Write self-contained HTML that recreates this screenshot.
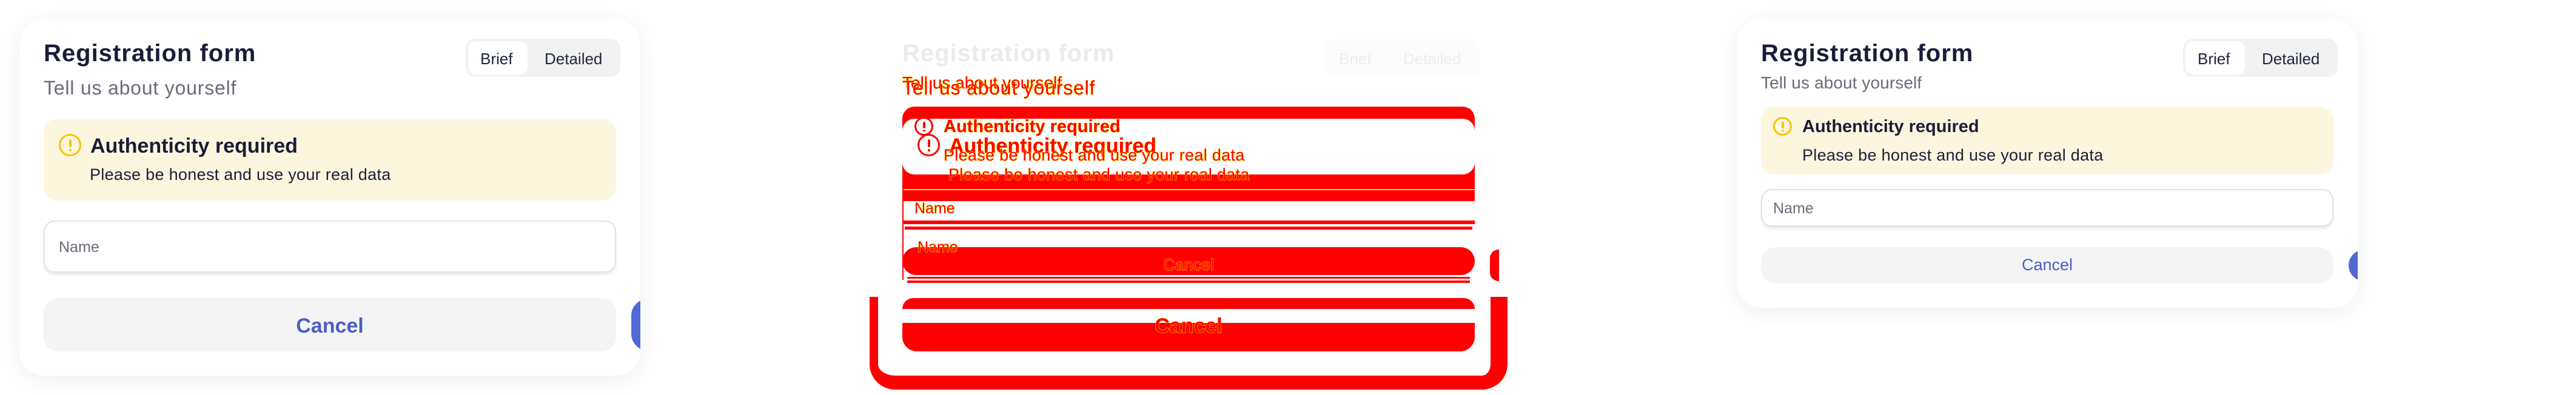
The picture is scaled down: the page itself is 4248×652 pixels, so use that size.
<!DOCTYPE html>
<html><head><meta charset="utf-8"><style>
*{margin:0;padding:0;box-sizing:border-box}
body{width:4248px;height:652px;background:#fff;position:relative;overflow:hidden;font-family:"Liberation Sans",sans-serif}
.panel{position:absolute;top:0;width:1416px;overflow:hidden;background:#fff}
.abs{position:absolute;white-space:nowrap;line-height:1}
.card{position:absolute;left:32px;top:32px;width:1024px;background:#fff;border-radius:40px;box-shadow:0 6px 40px rgba(0,0,0,0.07);overflow:hidden}
.title{font-weight:bold;font-size:40px;color:#1b1d38;letter-spacing:1px}
.toggle{position:absolute;left:736px;top:32px;width:255px;height:63px;background:#f2f2f2;border-radius:16px}
.pill{position:absolute;left:4px;top:4px;width:98px;height:55px;background:#fff;border-radius:13px}
.tg{font-size:26px;color:#1f2440}
.alert{position:absolute;left:40px;width:944px;background:#fdf6df;border-radius:22px}
.icon{position:absolute;border:3.5px solid #f8c400;border-radius:50%}
.icon i{position:absolute;left:50%;width:4px;margin-left:-2px;background:#f8c400;border-radius:2px}
.input{position:absolute;left:40px;width:944px;background:#fff;border:2px solid #e2e2e2;border-radius:18px;box-shadow:0 4px 5px rgba(0,0,0,0.08)}
.btn{position:absolute;left:40px;width:944px;background:#f4f4f4;border-radius:24px}
.blue{position:absolute;left:1009px;width:60px;background:#5069d4;border-radius:28px}
.red{position:absolute;background:#ff0000}
.rt{color:#ff0000;-webkit-text-stroke:1px #ffee00;paint-order:stroke fill}
</style></head><body>

<!-- LEFT PANEL -->
<div class="panel" style="left:0;height:652px;border-radius:0 0 16px 16px">
 <div class="card" style="height:588px">
  <div class="abs title" style="left:40px;top:36px">Registration form</div>
  <div class="abs" style="left:40px;top:97px;font-size:32px;color:#6a6b78;letter-spacing:0.8px">Tell us about yourself</div>
  <div class="toggle"><div class="pill"></div>
   <div class="abs tg" style="left:24px;top:20px">Brief</div>
   <div class="abs tg" style="left:130px;top:20px">Detailed</div></div>
  <div class="alert" style="top:164px;height:135px">
   <div class="icon" style="left:25px;top:25px;width:37px;height:37px"><i style="top:6px;height:13px"></i><i style="top:22px;height:4px"></i></div>
   <div class="abs" style="left:77px;top:28px;font-size:34px;font-weight:bold;color:#1b1d38">Authenticity required</div>
   <div class="abs" style="left:76px;top:79px;font-size:27px;color:#1b1d38;letter-spacing:0.3px">Please be honest and use your real data</div>
  </div>
  <div class="input" style="top:332px;height:86px">
   <div class="abs" style="left:23px;top:30px;font-size:25px;color:#6a6b78">Name</div></div>
  <div class="btn" style="top:460px;height:88px">
   <div class="abs" style="left:0;width:944px;text-align:center;top:29px;font-size:34px;font-weight:bold;color:#4a5fc4">Cancel</div></div>
  <div class="blue" style="top:461px;height:86px"></div>
 </div>
</div>

<!-- MIDDLE DIFF PANEL -->
<div class="panel" style="left:1416px;height:652px">
 <div class="abs title" style="left:72px;top:68px;color:#ebebeb">Registration form</div>
 <div style="position:absolute;left:768px;top:64px;width:255px;height:63px;background:#fcfcfc;border-radius:16px"></div>
 <div class="abs tg" style="left:792px;top:84px;color:#ececec">Brief</div>
 <div class="abs tg" style="left:898px;top:84px;color:#ececec">Detailed</div>
 <div class="abs rt" style="left:72px;top:123px;font-size:28px">Tell us about yourself</div>
 <div class="abs rt" style="left:72px;top:129px;font-size:32px;letter-spacing:0.8px">Tell us about yourself</div>
 <div class="red" style="left:72px;top:176px;width:944px;height:156px;border-radius:20px"></div>
 <div style="position:absolute;left:72px;top:196px;width:944px;height:92px;background:#fff;border-radius:20px"></div>
 <div class="red" style="left:72px;top:312px;width:944px;height:20px;border-top:2px solid #ffee00"></div>
 <div style="position:absolute;left:72px;top:332px;width:944px;height:32px;background:#fff"></div>
 <div class="red" style="left:72px;top:364px;width:944px;height:6px"></div>
 <div class="red" style="left:76px;top:374px;width:936px;height:5px"></div>
 <div class="red" style="left:72px;top:408px;width:944px;height:46px;border-radius:24px"></div>
 <div class="red" style="left:80px;top:457px;width:928px;height:3px"></div>
 <div class="red" style="left:80px;top:463px;width:928px;height:4px"></div>
 <div style="position:absolute;left:72px;top:312px;width:2px;height:150px;background:#ff0000"></div>
 <div style="position:absolute;left:18px;top:490px;width:1052px;height:153px;border:solid #ff0000;border-width:0 28px 23px 14px;border-radius:0 0 42px 42px"></div>
 <div class="red" style="left:72px;top:492px;width:944px;height:18px;border-radius:18px 18px 0 0"></div>
 <div class="red" style="left:72px;top:533px;width:944px;height:47px;border-radius:0 0 24px 24px"></div>
 <div class="red" style="left:1041px;top:412px;width:15px;height:52px;border-radius:14px 0 0 14px"></div>
 <div class="icon" style="left:92px;top:193px;width:31px;height:31px;border-color:#ff0000"><i style="top:5px;height:11px;background:#ff0000"></i><i style="top:18px;height:3px;background:#ff0000"></i></div>
 <div class="icon" style="left:97px;top:221px;width:37px;height:37px;border-color:#ff0000"><i style="top:6px;height:13px;background:#ff0000"></i><i style="top:22px;height:4px;background:#ff0000"></i></div>
 <div class="abs rt" style="left:140px;top:195px;font-size:29px;font-weight:bold">Authenticity required</div>
 <div class="abs rt" style="left:149px;top:224px;font-size:34px;font-weight:bold">Authenticity required</div>
 <div class="abs rt" style="left:140px;top:243px;font-size:27px;letter-spacing:0.3px">Please be honest and use your real data</div>
 <div class="abs rt" style="left:148px;top:275px;font-size:27px;letter-spacing:0.3px">Please be honest and use your real data</div>
 <div class="abs rt" style="left:92px;top:332px;font-size:25px">Name</div>
 <div class="abs rt" style="left:97px;top:396px;font-size:25px">Name</div>
 <div class="abs rt" style="left:72px;width:944px;text-align:center;top:424px;font-size:27px">Cancel</div>
 <div class="abs rt" style="left:72px;width:944px;text-align:center;top:521px;font-size:34px;font-weight:bold">Cancel</div>
</div>

<!-- RIGHT PANEL -->
<div class="panel" style="left:2832px;height:540px;border-radius:0 0 16px 16px;background:#fff">
 <div class="card" style="height:476px">
  <div class="abs title" style="left:40px;top:36px">Registration form</div>
  <div class="abs" style="left:40px;top:91px;font-size:28px;color:#6a6b78;letter-spacing:0.1px">Tell us about yourself</div>
  <div class="toggle"><div class="pill"></div>
   <div class="abs tg" style="left:24px;top:20px">Brief</div>
   <div class="abs tg" style="left:130px;top:20px">Detailed</div></div>
  <div class="alert" style="top:144px;height:112px">
   <div class="icon" style="left:20px;top:17px;width:31px;height:31px"><i style="top:5px;height:11px"></i><i style="top:18px;height:3px"></i></div>
   <div class="abs" style="left:68px;top:19px;font-size:29px;font-weight:bold;color:#1b1d38">Authenticity required</div>
   <div class="abs" style="left:68px;top:67px;font-size:27px;color:#1b1d38;letter-spacing:0.3px">Please be honest and use your real data</div>
  </div>
  <div class="input" style="top:280px;height:62px">
   <div class="abs" style="left:18px;top:18px;font-size:25px;color:#6a6b78">Name</div></div>
  <div class="btn" style="top:376px;height:60px">
   <div class="abs" style="left:0;width:944px;text-align:center;top:16px;font-size:27px;color:#4a5fc4">Cancel</div></div>
  <div class="blue" style="top:380px;height:52px"></div>
 </div>
</div>
</body></html>
